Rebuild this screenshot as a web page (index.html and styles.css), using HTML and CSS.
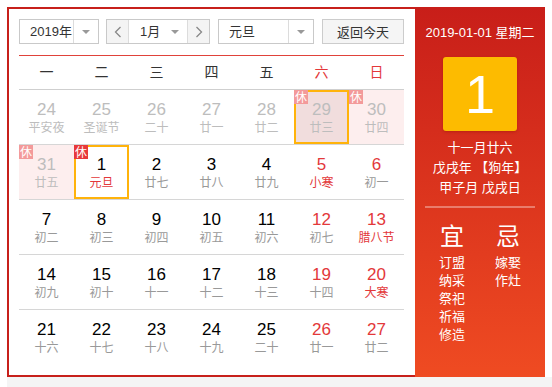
FILE: index.html
```html
<!DOCTYPE html>
<html lang="zh-CN">
<head>
    <meta charset="UTF-8">
    <title>万年历</title>
    <link rel="stylesheet" href="styles.css">
</head>
<body>
    <div class="calendar">
        <div class="main">
            <div class="toolbar">
                <div class="select year-select">
                    <span class="value">2019年</span>
                    <span class="arrow"></span>
                </div>
                <div class="select month-select">
                    <span class="nav"><svg width="8" height="12" viewBox="0 0 8 12"><path d="M6.5 1 L1.5 6 L6.5 11" fill="none" stroke="#888" stroke-width="1.3"/></svg></span>
                    <span class="value">1月</span>
                    <span class="arrow no-line"></span>
                    <span class="nav nav-next"><svg width="8" height="12" viewBox="0 0 8 12"><path d="M1.5 1 L6.5 6 L1.5 11" fill="none" stroke="#888" stroke-width="1.3"/></svg></span>
                </div>
                <div class="select holiday-select">
                    <span class="value">元旦</span>
                    <span class="arrow"></span>
                </div>
                <button class="btn-today">返回今天</button>
            </div>

            <div class="week-head">
                <span>一</span><span>二</span><span>三</span><span>四</span><span>五</span>
                <span class="weekend">六</span><span class="weekend">日</span>
            </div>

            <div id="days" class="days"></div>
        </div>

        <div class="side">
            <div class="side-date">2019-01-01 星期二</div>
            <div class="big-day">1</div>
            <div class="lunar-info">
                <p>十一月廿六</p>
                <p>戊戌年 【狗年】</p>
                <p>甲子月 戊戌日</p>
            </div>
            <div class="side-line"></div>
            <div class="yiji">
                <div class="yiji-col">
                    <h3>宜</h3>
                    <p>订盟</p><p>纳采</p><p>祭祀</p><p>祈福</p><p>修造</p>
                </div>
                <div class="yiji-col">
                    <h3>忌</h3>
                    <p>嫁娶</p><p>作灶</p>
                </div>
            </div>
        </div>
    </div>
    <div class="bottom-strip"></div>

    <script>
        // d: 日期, l: 农历/节日, o: 非本月, r: 休息日, h: 节日(红字), s: 选中, v: 悬停
        const days = [
            { d: 24, l: '平安夜', o: 1 }, { d: 25, l: '圣诞节', o: 1 }, { d: 26, l: '二十', o: 1 },
            { d: 27, l: '廿一', o: 1 }, { d: 28, l: '廿二', o: 1 }, { d: 29, l: '廿三', o: 1, r: 1, v: 1 },
            { d: 30, l: '廿四', o: 1, r: 1 },
            { d: 31, l: '廿五', o: 1, r: 1 }, { d: 1, l: '元旦', r: 1, h: 1, s: 1 }, { d: 2, l: '廿七' },
            { d: 3, l: '廿八' }, { d: 4, l: '廿九' }, { d: 5, l: '小寒', h: 1 }, { d: 6, l: '初一' },
            { d: 7, l: '初二' }, { d: 8, l: '初三' }, { d: 9, l: '初四' }, { d: 10, l: '初五' },
            { d: 11, l: '初六' }, { d: 12, l: '初七' }, { d: 13, l: '腊八节', h: 1 },
            { d: 14, l: '初九' }, { d: 15, l: '初十' }, { d: 16, l: '十一' }, { d: 17, l: '十二' },
            { d: 18, l: '十三' }, { d: 19, l: '十四' }, { d: 20, l: '大寒', h: 1 },
            { d: 21, l: '十六' }, { d: 22, l: '十七' }, { d: 23, l: '十八' }, { d: 24, l: '十九' },
            { d: 25, l: '二十' }, { d: 26, l: '廿一' }, { d: 27, l: '廿二' }
        ];

        const daysEl = document.getElementById('days');
        for (let i = 0; i < days.length; i += 7) {
            const row = document.createElement('div');
            row.className = 'week-row';
            days.slice(i, i + 7).forEach((day, col) => {
                const cell = document.createElement('div');
                cell.className = 'day';
                if (day.o) cell.classList.add('other');
                if (day.r) cell.classList.add('rest');
                if (day.s) cell.classList.add('selected');
                if (day.v) cell.classList.add('hover');
                if (col >= 5) cell.classList.add('weekend');
                if (day.h) cell.classList.add('festival');
                cell.innerHTML = (day.r ? '<span class="badge">休</span>' : '') +
                    `<span class="num">${day.d}</span><span class="lunar">${day.l}</span>`;
                row.appendChild(cell);
            });
            daysEl.appendChild(row);
        }
    </script>
</body>
</html>
```

FILE: styles.css
```css
body { margin: 0; padding: 7px 0 0 7px; background: #fff; font-family: "Liberation Sans", Arial, "Noto Sans CJK SC", sans-serif; color: #000; }
p, h3 { margin: 0; }
.calendar { display: flex; width: 538px; height: 370px; box-sizing: border-box; border: 2px solid #c7201b; }
.main { width: 385px; padding: 10px 0 0 10px; }
.bottom-strip { height: 10px; background: #f4f4f4; }

.toolbar { display: flex; height: 25px; }
.select { display: flex; height: 25px; box-sizing: border-box; border: 1px solid #c9c9c9; font-size: 13px; color: #333; background: #fff; }
.select .value { flex: 1; padding-left: 10px; line-height: 23px; }
.select .arrow { width: 24px; border-left: 1px solid #dcdcdc; position: relative; }
.select .arrow::after { content: ''; position: absolute; left: 8px; top: 10px; border: 4px solid transparent; border-top-color: #999; border-bottom: 0; }
.select .arrow.no-line { border-left: 0; width: 22px; }
.select .arrow.no-line::after { left: 6px; }
.year-select { width: 80px; margin-right: 7px; }
.month-select { width: 104px; margin-right: 8px; }
.month-select .value { padding-left: 11px; }
.month-select .nav { width: 21px; background: #f4f4f4; border-right: 1px solid #dcdcdc; display: flex; align-items: center; justify-content: center; }
.month-select .nav-next { border-right: 0; border-left: 1px solid #dcdcdc; }
.holiday-select { width: 96px; margin-right: 8px; }
.btn-today { width: 82px; height: 25px; border: 1px solid #ccc; background: #f5f5f5; font-family: inherit; font-size: 13px; color: #333; padding: 0; }

.week-head { display: grid; grid-template-columns: repeat(7, 55px); margin-top: 11px; height: 35px; box-sizing: border-box; border-top: 1px solid #e0423a; border-bottom: 1px solid #cfcfcf; font-size: 14px; color: #333; }
.week-head span { text-align: center; line-height: 33px; }
.week-head .weekend { color: #e3383a; }

.week-row { display: grid; grid-template-columns: repeat(7, 55px); height: 55px; box-sizing: border-box; border-bottom: 1px solid #d6d6d6; }
.week-row:last-child { border-bottom: 0; }
.day { position: relative; display: flex; flex-direction: column; align-items: center; padding-top: 10px; box-sizing: border-box; height: 54px; }
.day .num { font-size: 17px; line-height: 20px; }
.day .lunar { font-size: 12px; line-height: 16px; color: #999; }
.day.weekend .num { color: #e3383a; }
.day.festival .lunar { color: #e3383a; }
.day.other .num, .day.other .lunar { color: #bdbdbd; }
.day.rest { background: #fdeeee; }
.day.selected { background: #fff; box-shadow: inset 0 0 0 2px #ffb30b; }
.day.hover { background: #f1dddd; box-shadow: inset 0 0 0 2px #ffb30b; }
.badge { position: absolute; top: 0; left: 0; width: 14px; height: 14px; background: #e8393a; color: #fff; font-size: 12px; line-height: 14px; text-align: center; font-family: "Noto Sans CJK SC", sans-serif; }
.day.other .badge { background: #f39a9a; }

.side { width: 130px; margin: -2px -2px -2px 11px; background: linear-gradient(#c81e19, #ef4b22); color: #fff; text-align: center; }
.side-date { margin-top: 16px; font-size: 13px; line-height: 20px; }
.big-day { width: 74px; height: 74px; margin: 14px auto 0; background: #fdbb00; border-radius: 3px; box-shadow: 0 1px 3px rgba(120, 0, 0, 0.3); font-size: 54px; line-height: 74px; }
.lunar-info { margin-top: 7px; font-size: 13px; line-height: 20px; }
.side-line { height: 2px; margin: 8px 10px 0; background: rgba(255, 255, 255, 0.35); }
.yiji { display: grid; grid-template-columns: 56px 56px; justify-content: center; margin-top: 14px; }
.yiji h3 { font-size: 24px; line-height: 30px; font-weight: normal; margin-bottom: 2px; }
.yiji p { font-size: 13px; line-height: 18px; }
```
